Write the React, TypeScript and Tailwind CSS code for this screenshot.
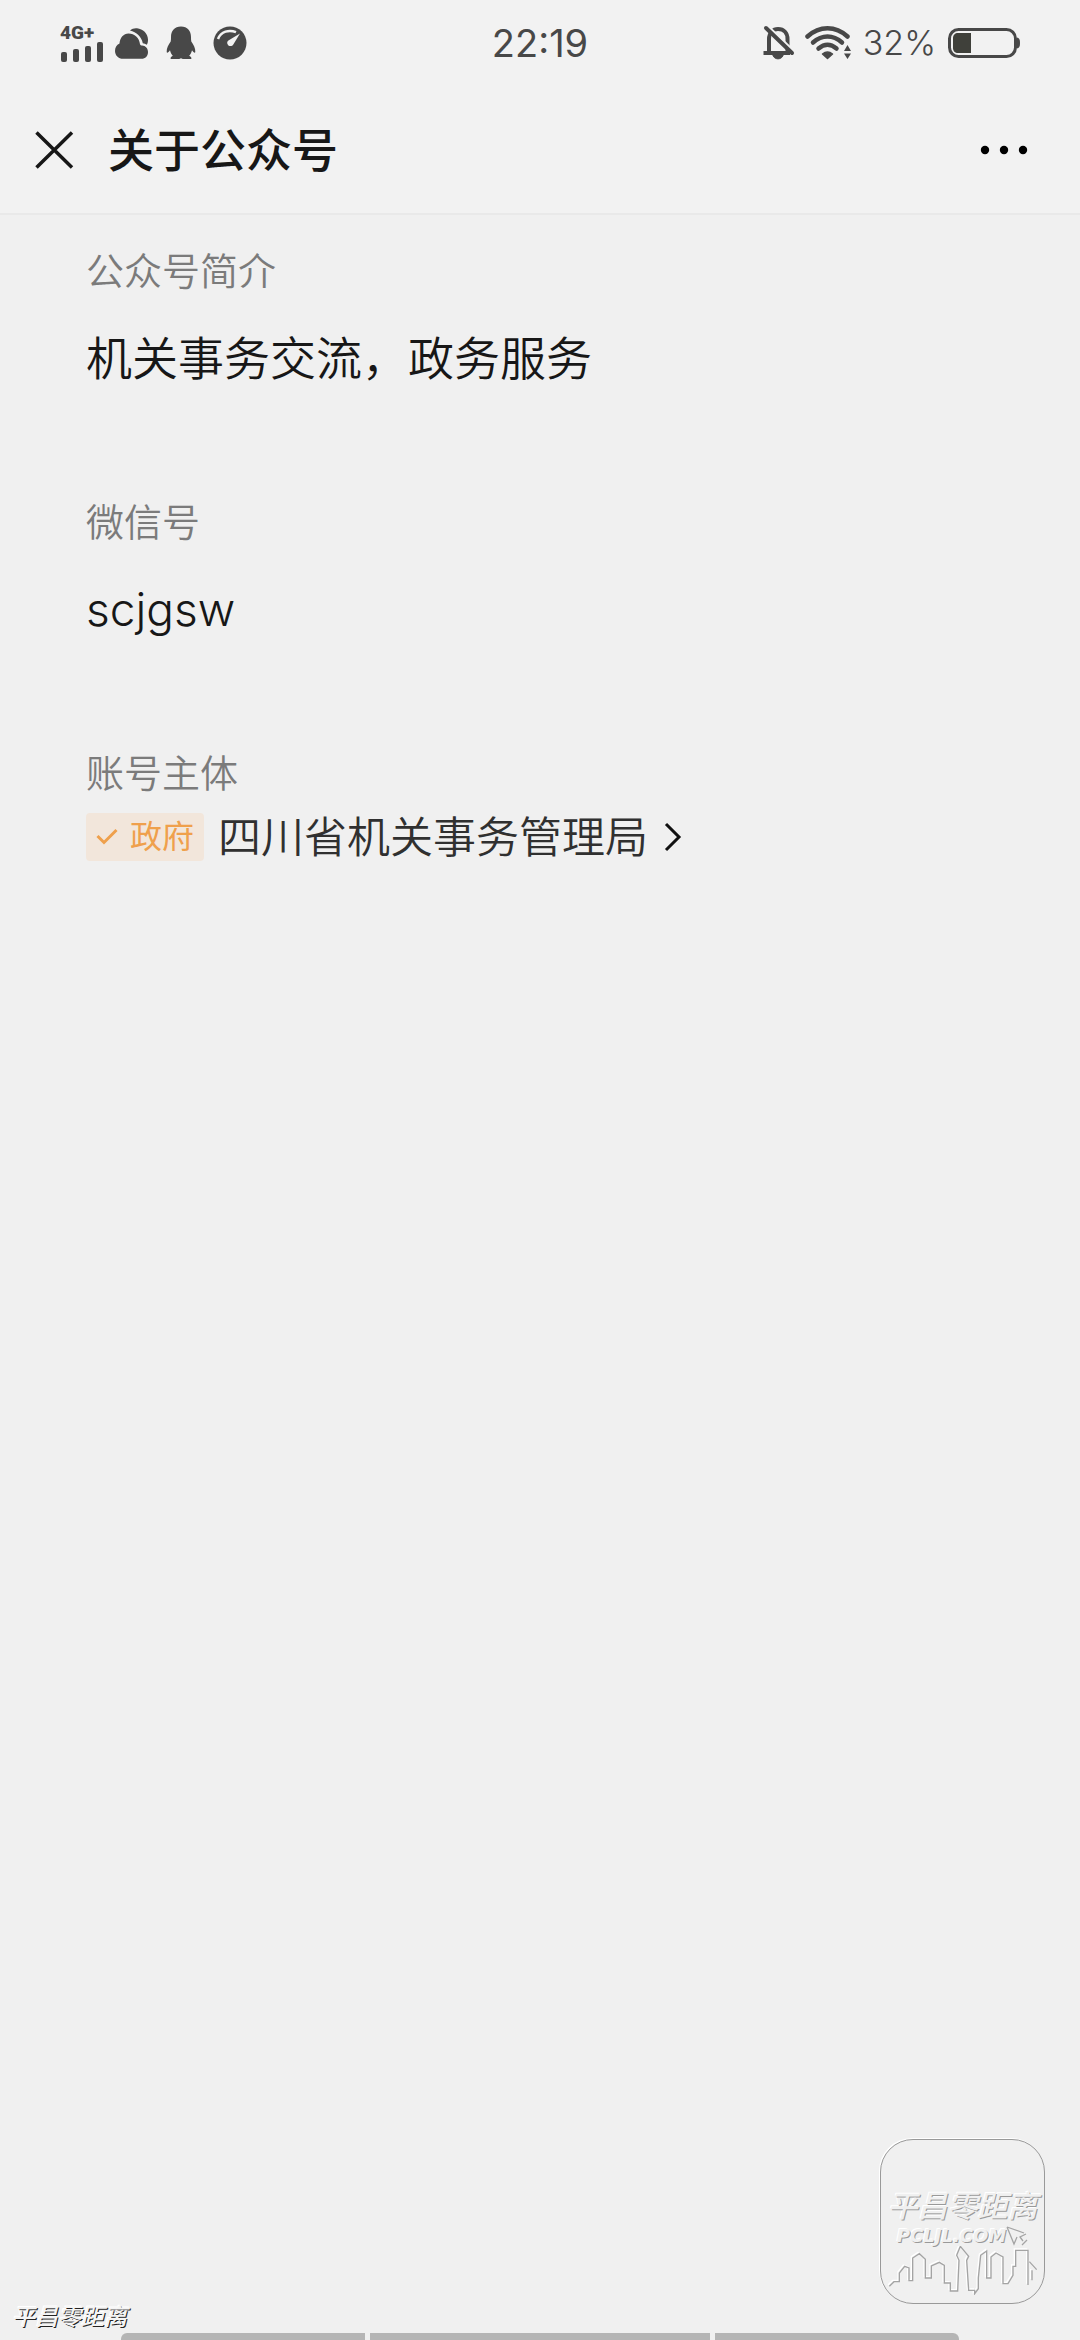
import type { ReactNode } from "react";

const SKYLINE =
  "M94 518L108 504H124V478L140 458L153 463V501H164V433L184 420L202 437V493H220V457L244 446L259 455V508H277V532H299L303 440L296 425L307 398L332 428L326 440L332 530H350V540L361 525V493L368 425L386 412V493H399V430L414 418L435 430V510H450L465 485V458H473V410H510V514M522 500V470M514 444L536 468";

function StatusBar() {
  return (
    <div className="grid h-[86px] grid-cols-[1fr_auto_1fr] items-center px-[60px] text-[#484848]">
      <div className="flex items-center">
        <div className="w-[44px]">
          <div className="font-[Roboto,sans-serif] text-[19px] leading-4 font-black">4G+</div>
          <svg className="block" width="44" height="21" viewBox="0 0 44 21" fill="currentColor" aria-hidden="true">
            <rect x="1" y="11" width="6" height="10" rx="2" />
            <rect x="13" y="8" width="6" height="13" rx="2" />
            <rect x="25" y="5" width="6" height="16" rx="2" />
            <rect x="37" y="1" width="6" height="20" rx="2" />
          </svg>
        </div>
        <svg className="ml-[10px]" width="35" height="34" viewBox="0 0 35 34" fill="currentColor" aria-hidden="true">
          <path d="M16 4.5C18 2.7 20.500 2 23 2.300C29 3 33.800 7.500 34 13.500C34.100 15.500 33.600 17.500 32.800 18.800C31.500 17.900 30.200 17.500 28.800 17.300C27.500 10.500 22.500 6 16 4.500Z" />
          <path d="M14.500 7.500C20.500 7.500 25.300 11.800 26 18.200C26.300 19.200 27 19.400 28 19.500C31.500 19.700 34 22.300 34 26C34 30 31.300 32.800 27.500 32.800H9C4.500 32.800 1 29.400 1 25C1 21.600 2.500 19 5.500 17.600C6 11.800 9.500 7.500 14.500 7.500Z" />
        </svg>
        <svg className="ml-[17px]" width="30" height="34" viewBox="0 0 30 34" fill="currentColor" aria-hidden="true">
          <path d="M15 .5C21.500 .5 25 5 25 11C25 12.500 25 14 25.300 15.500C27.500 18.500 29.600 22.500 29.300 26C29.200 27.300 27.500 26.800 26 24.300C25.500 26.600 24.700 28.300 23.200 29.800C25 30.600 25.700 31.600 25.300 33H16.800L15 32.300L13.200 33H4.700C4.300 31.600 5 30.600 6.800 29.800C5.300 28.300 4.500 26.600 4 24.300C2.500 26.800 .8 27.300 .7 26C.4 22.500 2.500 18.500 4.700 15.500C5 14 5 12.500 5 11C5 5 8.500 .5 15 .5Z" />
        </svg>
        <svg className="ml-[17px]" width="34" height="34" viewBox="0 0 34 34" aria-hidden="true">
          <circle cx="17" cy="17" r="16.500" fill="currentColor" />
          <path d="M5 13C8 5.500 16 3.200 23 6.200" fill="none" stroke="#f2f2f2" strokeWidth="2.500" />
          <path d="M27 7.500L20.300 18.500C19.300 20.200 17 20.600 15.400 19.400C13.700 18 13.800 15.700 15.400 14.600Z" fill="#f2f2f2" />
        </svg>
      </div>

      <time className="text-[38px] leading-10">22:19</time>

      <div className="flex items-center justify-end">
        <svg width="32" height="36" viewBox="0 0 32 36" fill="none" stroke="currentColor" strokeWidth="4" aria-hidden="true">
          <path d="M6 27V14C6 8 10 4 15 4C21 4 24.500 8 24.500 14V27" />
          <path d="M0.500 28H27" />
          <path d="M9.500 29C10.500 35.500 19.500 35.500 20.500 29Z" fill="currentColor" strokeWidth="1" />
          <path d="M5.500 2L31.500 27" stroke="#f2f2f2" strokeWidth="3" />
          <path d="M3 3L29 28" strokeLinecap="round" />
        </svg>
        <svg className="ml-[10px]" width="46" height="36" viewBox="0 0 46 36" fill="none" stroke="currentColor" strokeWidth="4.500" strokeLinecap="round" aria-hidden="true">
          <path d="M2.500 11.500C14.500 .5 30.500 .5 42.500 11.500" />
          <path d="M8 17.500C17 9.500 28 9.500 37 17.500" />
          <path d="M13.500 23.500C19.500 18.500 25.500 18.500 31.500 23.500" />
          <path d="M17.500 29C20.500 26.500 24.500 26.500 27.500 29L22.500 33.500Z" fill="currentColor" strokeWidth="1.500" strokeLinejoin="round" />
          <path d="M42.500 20L46 26H39ZM42.500 34L46 28.500H39Z" fill="currentColor" stroke="none" />
        </svg>
        <span className="ml-3 text-[34px] leading-10 font-[350]">32%</span>
        <svg className="ml-3" width="72" height="32" viewBox="0 0 72 32" aria-hidden="true">
          <rect x="1.500" y="2.500" width="66" height="27" rx="9" fill="none" stroke="currentColor" strokeWidth="3" />
          <path d="M69 10.500C71 11 72 12 72 16C72 20 71 21 69 21.500Z" fill="currentColor" />
          <path d="M23 6V26H10C7 26 5 24 5 21V11C5 8 7 6 10 6Z" fill="#3f403a" />
        </svg>
      </div>
    </div>
  );
}

function Header() {
  return (
    <header className="flex h-[129px] items-center border-b-2 border-[#e9e9e9] pr-[52px] pl-[34px] text-[#171717]">
      <button type="button" aria-label="关闭" className="mr-[34px]">
        <svg className="block" width="40" height="40" viewBox="0 0 40 40" stroke="currentColor" strokeWidth="3.500" aria-hidden="true">
          <path d="M2.500 2.500L38 37.500M38 2.500L2.500 37.500" />
        </svg>
      </button>
      <h1 className="flex-1 text-[46px] leading-[64px] font-medium">关于公众号</h1>
      <button type="button" aria-label="更多">
        <svg className="block" width="48" height="40" viewBox="0 0 48 40" fill="#000" aria-hidden="true">
          <circle cx="5" cy="20" r="4.200" />
          <circle cx="24" cy="20" r="4.200" />
          <circle cx="43" cy="20" r="4.200" />
        </svg>
      </button>
    </header>
  );
}

function Field({ label, children }: { label: string; children: ReactNode }) {
  return (
    <section>
      <h2 className="text-[38px] leading-14 font-[350] text-[#7b7b7b]">{label}</h2>
      {children}
    </section>
  );
}

function Stamp() {
  return (
    <div className="mb-[29px] flex size-[165px] flex-col items-center overflow-hidden rounded-[33px] border border-[#999] pt-[46px] text-[#f0f0f0] shadow-[-1px_-1px_0_#fff]">
      <div className="text-[30px] leading-10 font-medium whitespace-nowrap italic [text-shadow:1px_1px_0_#999,-1px_-1px_0_#fff]">
        平昌零距离
      </div>
      <div className="flex items-center">
        <span className="font-['DejaVu_Sans',sans-serif] text-[18px] leading-5 font-bold italic [text-shadow:1px_1px_0_#999,-1px_-1px_0_#fff]">
          PCLJL.COM
        </span>
        <svg width="22" height="20" viewBox="0 0 22 20" fill="none" stroke="#a4a4a4" strokeWidth="1.300" aria-hidden="true">
          <path d="M1 1L18 7M1 1L8 18L11 11M20 8L14 11L17 15M16 19L21 14" />
        </svg>
      </div>
      <svg width="150" height="49" viewBox="90 397 450 147" fill="none" strokeWidth="4" aria-hidden="true">
        <path d={SKYLINE} stroke="#fff" transform="translate(-4 -4)" />
        <path d={SKYLINE} stroke="#a4a4a4" />
      </svg>
    </div>
  );
}

export default function App() {
  return (
    <div className="flex min-h-screen flex-col bg-[#f0f0f0] font-[Inter,'Noto_Sans_CJK_SC',sans-serif]" lang="zh-CN">
      <div className="bg-[#f2f2f2]">
        <StatusBar />
        <Header />
      </div>

      <main className="flex flex-1 flex-col gap-[100px] px-[86px] pt-7">
        <Field label="公众号简介">
          <p className="mt-6 text-[46px] leading-[71px] font-[350] text-[#171717]">机关事务交流，政务服务</p>
        </Field>
        <Field label="微信号">
          <p className="mt-6 text-[46px] leading-[71px] font-[350] text-[#171717]">scjgsw</p>
        </Field>
        <Field label="账号主体">
          <a href="#subject" className="mt-3 flex items-center">
            <span className="flex h-12 items-center rounded-sm bg-[#f2e6db] px-[10px] text-[32px] leading-12 text-[#efa04c]">
              <svg className="mr-3" width="22" height="18" viewBox="0 0 22 18" fill="none" stroke="currentColor" strokeWidth="3" aria-hidden="true">
                <path d="M1.500 8L8 14.500L20.500 2" />
              </svg>
              政府
            </span>
            <span className="ml-[14px] text-[43px] leading-12 font-[350] text-[#303030]">四川省机关事务管理局</span>
            <svg className="ml-4" width="18" height="30" viewBox="0 0 18 30" fill="none" stroke="#111" strokeWidth="3" aria-hidden="true">
              <path d="M2 2L15 15L2 28" />
            </svg>
          </a>
        </Field>
      </main>

      <footer>
        <div className="flex items-end justify-between pr-[35px] pl-3">
          <span className="text-[23px] leading-8 font-medium text-[#f4f4f4] italic [text-shadow:1px_1px_0_#222,-1px_-1px_0_#fff]">
            平昌零距离
          </span>
          <Stamp />
        </div>
        <div className="flex h-[7px] gap-[5px] px-[121px]">
          <div className="flex-[244] rounded-tl-md bg-[#b5b5b5]" />
          <div className="flex-[340] bg-[#b5b5b5]" />
          <div className="flex-[244] rounded-tr-md bg-[#b5b5b5]" />
        </div>
      </footer>
    </div>
  );
}
